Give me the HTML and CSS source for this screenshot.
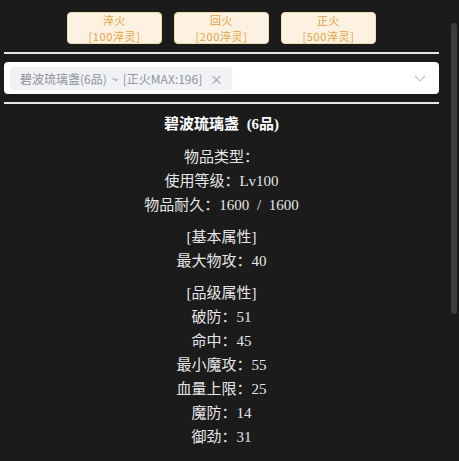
FILE: index.html
```html
<!DOCTYPE html>
<html lang="zh">
<head>
<meta charset="utf-8">
<link rel="stylesheet" href="styles.css">
</head>
<body>
<div class="page">
  <main class="content">
    <div class="btn-row">
      <button class="btn"><span class="btn-line">淬火</span><span class="btn-line">[100淬灵]</span></button>
      <button class="btn"><span class="btn-line">回火</span><span class="btn-line">[200淬灵]</span></button>
      <button class="btn"><span class="btn-line">正火</span><span class="btn-line">[500淬灵]</span></button>
    </div>
    <div class="rule"></div>
    <div class="select">
      <span class="tag">碧波琉璃盏(6品) ~ [正火MAX:196]<span class="tag-close">×</span></span>
      <svg class="arrow" width="14" height="14" viewBox="0 0 14 14"><path d="M2 5 L7 10 L12 5" fill="none" stroke="#c0c4cc" stroke-width="1.2"/></svg>
    </div>
    <div class="rule"></div>
    <div class="detail">
      <div class="title">碧波琉璃盏 (6品)</div>
      <div class="group">
        <div class="line">物品类型：</div>
        <div class="line">使用等级：Lv100</div>
        <div class="line">物品耐久：1600 / 1600</div>
      </div>
      <div class="group">
        <div class="line">[基本属性]</div>
        <div class="line">最大物攻：40</div>
      </div>
      <div class="group">
        <div class="line">[品级属性]</div>
        <div class="line">破防：51</div>
        <div class="line">命中：45</div>
        <div class="line">最小魔攻：55</div>
        <div class="line">血量上限：25</div>
        <div class="line">魔防：14</div>
        <div class="line">御劲：31</div>
      </div>
    </div>
  </main>
  <div class="scrollbar"><div class="thumb"></div></div>
</div>
</body>
</html>
```

FILE: styles.css
```css
html, body {
  margin: 0;
  padding: 0;
  background: #1b1b1b;
}
.page {
  display: flex;
  width: 459px;
  height: 461px;
  overflow: hidden;
}
.content {
  width: 435px;
  margin-left: 4px;
  padding-top: 12px;
  display: flex;
  flex-direction: column;
}
.btn-row {
  display: flex;
  justify-content: center;
  gap: 12px;
}
.btn {
  width: 95px;
  height: 32px;
  box-sizing: border-box;
  padding: 0;
  background: #fdf1e1;
  border: 1px solid #f5dab1;
  border-radius: 4px;
  color: #e6a23c;
  font-family: "Noto Sans CJK SC", "Noto Sans", sans-serif;
  font-size: 11px;
  letter-spacing: 0.6px;
  display: flex;
  flex-direction: column;
  align-items: center;
  justify-content: center;
}
.btn-line {
  display: block;
  height: 16px;
  line-height: 16px;
}
.rule {
  height: 2px;
  background: #e8e8e8;
  margin-top: 8px;
}
.select {
  margin-top: 8px;
  height: 32px;
  box-sizing: border-box;
  background: #fff;
  border-radius: 4px;
  display: flex;
  align-items: center;
  padding: 0 12px 0 6px;
}
.tag {
  height: 23px;
  box-sizing: border-box;
  display: flex;
  align-items: center;
  background: #f0f2f5;
  border-radius: 4px;
  color: #909399;
  font-family: "Noto Sans CJK SC", "Noto Sans", sans-serif;
  font-size: 12px;
  word-spacing: 2px;
  padding: 0 9px 0 10px;
  width: 222px;
  white-space: nowrap;
}
.tag-close {
  margin-left: auto;
  font-size: 13px;
  color: #909399;
}
.arrow {
  margin-left: auto;
}
.detail {
  margin-top: 8px;
  text-align: center;
  color: #e6e6e6;
  font-family: "Liberation Serif", "Noto Sans CJK SC", serif;
  font-size: 15px;
  line-height: 24px;
  word-spacing: 4px;
}
.title {
  color: #fff;
  font-weight: bold;
  margin-bottom: 9px;
}
.group + .group {
  margin-top: 8px;
}
.scrollbar {
  margin-left: 12px;
  width: 6px;
  padding-top: 23px;
}
.thumb {
  height: 291px;
  background: #3c3c3c;
  border-radius: 3px;
}
```
